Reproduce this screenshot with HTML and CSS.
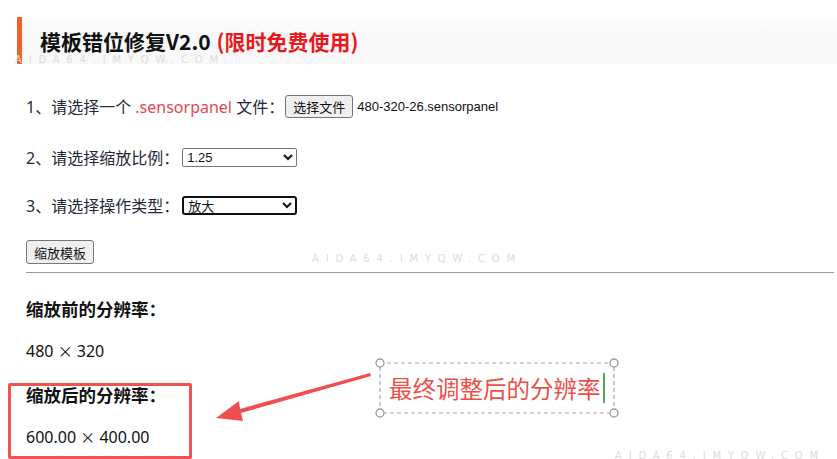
FILE: index.html
```html
<!DOCTYPE html>
<html>

<head>
    <meta charset="utf-8">
    <meta content="width=device-width, initial-scale=1" name="viewport" />
    <link rel="stylesheet" href="styles.css">
</head>

<body>
    <div id="page">
        <div id="titleBar">
            <span class="titleMain">模板错位修复V2.0</span>
            <span class="titleFree">(限时免费使用)</span>
        </div>

        <div id="mainDiv">
            <div class="row row1">
                <span>1、请选择一个 <span class="ext">.sensorpanel</span> 文件：</span>
                <button class="btn fileBtn">选择文件</button>
                <span class="fileName">480-320-26.sensorpanel</span>
            </div>
            <div class="row row2">
                <span>2、请选择缩放比例：</span>
                <select class="pick">
                    <option>1.25</option>
                </select>
            </div>
            <div class="row row3">
                <span>3、请选择操作类型：</span>
                <select class="pick pickFocus">
                    <option>放大</option>
                </select>
            </div>
            <div class="row row4">
                <button class="btn">缩放模板</button>
            </div>
            <hr class="line">
            <div class="resTitle first">缩放前的分辨率：</div>
            <div class="resValue">480 <span class="times">×</span> 320</div>
            <div class="resTitle">缩放后的分辨率：</div>
            <div class="resValue">600.00 <span class="times">×</span> 400.00</div>
        </div>

        <!-- screenshot annotations -->
        <span class="mark mark1">AIDA64.IMYQW.COM</span>
        <span class="mark mark2">AIDA64.IMYQW.COM</span>
        <span class="mark mark3">AIDA64.IMYQW.COM</span>

        <div id="redBox"></div>

        <svg id="arrow" width="837" height="459" viewBox="0 0 837 459">
            <polygon points="370,373 371,376 241,413 243,421 216,418 239,401 240,409" fill="#f04e4e" />
            <rect x="380" y="363" width="234" height="50" fill="none" stroke="#a8a8a8" stroke-width="1.2" stroke-dasharray="4 3" />
            <circle cx="380" cy="363" r="4" fill="#fff" stroke="#999" stroke-width="1.3" />
            <circle cx="614" cy="363" r="4" fill="#fff" stroke="#999" stroke-width="1.3" />
            <circle cx="380" cy="413" r="4" fill="#fff" stroke="#999" stroke-width="1.3" />
            <circle cx="614" cy="413" r="4" fill="#fff" stroke="#999" stroke-width="1.3" />
        </svg>

        <div id="noteText">最终调整后的分辨率<span class="cursor"></span></div>
    </div>
</body>

</html>
```

FILE: styles.css
```css
html,
body {
    margin: 0;
    background: #fff;
}

#page {
    position: relative;
    width: 837px;
    height: 459px;
    overflow: hidden;
    font-family: "Noto Sans", "Noto Sans CJK SC", sans-serif;
}

#titleBar {
    margin-top: 17px;
    height: 47px;
    border-left: 5px solid #f4602a;
    margin-left: 17px;
    background: linear-gradient(#fdfdfd, #f8f8f8 30%, #f8f8f8);
    display: flex;
    align-items: center;
    padding-left: 18px;
    font-family: "Noto Sans CJK SC", sans-serif;
    font-weight: bold;
    font-size: 21px;
}

.titleMain {
    color: #111;
}

.titleFree {
    color: #e8191c;
    margin-left: 6px;
}

#mainDiv {
    padding: 30px 3px 0 26px;
    color: #1f2a38;
    font-size: 16px;
}

.row {
    display: flex;
    align-items: center;
    height: 24px;
}

.row2 {
    margin-top: 27px;
}

.row3 {
    margin-top: 24px;
}

.row4 {
    margin-top: 23px;
}

.ext {
    color: #e5484d;
}

.btn {
    font-family: "Noto Sans CJK SC", sans-serif;
    font-size: 13px;
    height: 24px;
    padding: 0 7px;
    background: #efefef;
    border: 1px solid #767676;
    border-radius: 3px;
    color: #111;
}

.fileBtn {
    margin-left: 1px;
    height: 23px;
}

.fileName {
    font-family: "Liberation Sans", sans-serif;
    font-size: 13px;
    color: #111;
    margin-left: 4px;
}

.pick {
    margin-left: 3px;
    width: 115px;
    height: 19px;
    font-family: "Liberation Sans", "Noto Sans CJK SC", sans-serif;
    font-size: 13px;
    border: 1px solid #767676;
    border-radius: 2px;
    background: #fff;
    color: #111;
    padding: 0;
}

.pickFocus {
    border: 2px solid #101010;
    border-radius: 3px;
}

.line {
    margin: 8px 0 0 0;
    border: none;
    border-top: 1px solid #9a9a9a;
    height: 0;
}

.resTitle {
    font-family: "Noto Sans CJK SC", sans-serif;
    font-weight: bold;
    font-size: 17.5px;
    line-height: 24px;
    color: #111;
    margin-top: 20px;
}

.resTitle.first {
    margin-top: 24px;
}

.resValue {
    line-height: 24px;
    margin-top: 18px;
    color: #111;
}

.times {
    font-family: "Noto Sans CJK SC", sans-serif;
    font-size: 15px;
}

.mark {
    position: absolute;
    font-family: "DejaVu Sans", sans-serif;
    font-size: 10px;
    letter-spacing: 6.8px;
    color: #dcdcdc;
}

.mark1 {
    left: 15px;
    top: 54px;
}

.mark2 {
    left: 312px;
    top: 253px;
}

.mark3 {
    left: 615px;
    top: 450px;
}

#redBox {
    position: absolute;
    left: 8px;
    top: 383px;
    width: 178px;
    height: 70px;
    border: 3px solid #f05253;
    border-radius: 2px;
}

#arrow {
    position: absolute;
    left: 0;
    top: 0;
}

#noteText {
    position: absolute;
    left: 389px;
    top: 372px;
    height: 32px;
    display: flex;
    align-items: center;
    font-family: "Noto Sans CJK SC", sans-serif;
    font-size: 23.5px;
    color: #ec5049;
}

.cursor {
    display: inline-block;
    width: 2px;
    height: 30px;
    margin-left: 2px;
    background: #4cae50;
}
```
